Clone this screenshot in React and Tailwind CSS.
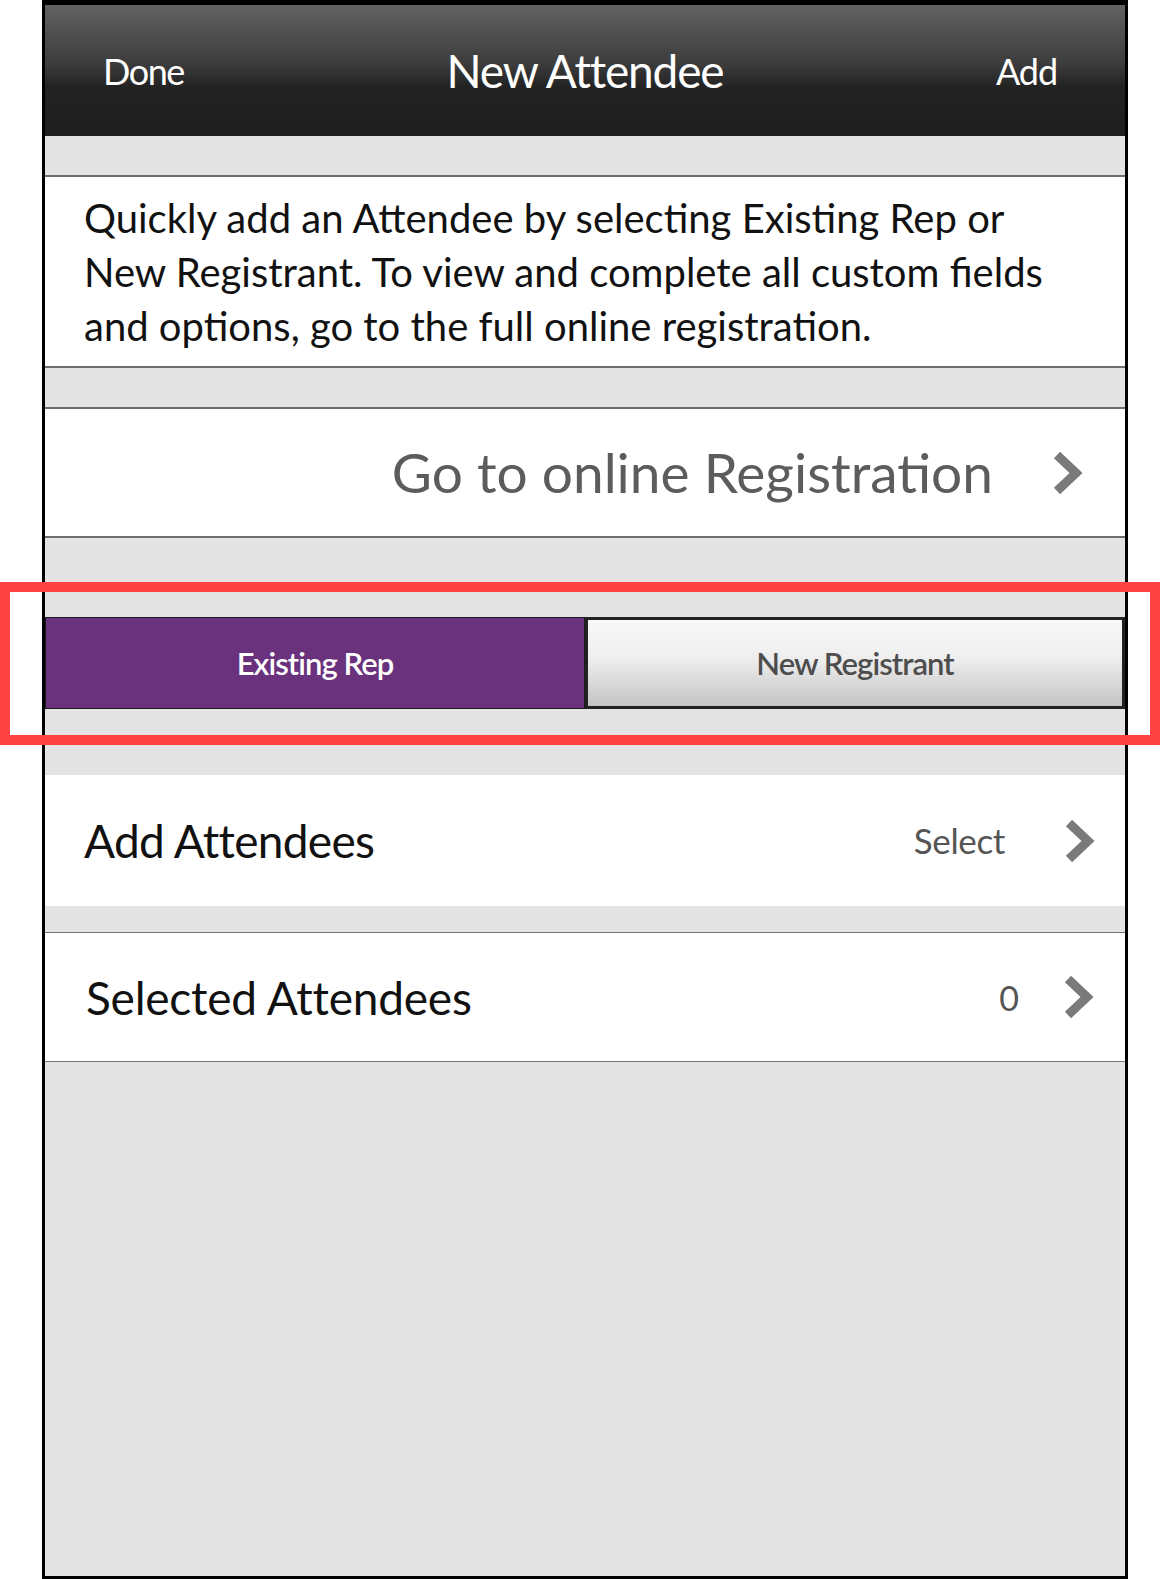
import React from "react";

const Chevron = ({ className = "" }) => (
  <svg viewBox="0 0 32 46" className={className}>
    <polyline
      points="6,5 25,23 6,41"
      fill="none"
      stroke="#7a7a7a"
      strokeWidth="9"
      strokeLinejoin="miter"
    />
  </svg>
);

export default function App() {
  return (
    <div
      className="relative w-[1160px] h-[1579px] bg-white"
      style={{ fontFamily: "Lato, 'Noto Sans', sans-serif" }}
    >
      <div className="ml-[42px] w-[1086px] h-full flex flex-col border-x-[3px] border-t-[5px] border-b-[3px] border-black bg-[#e4e4e4]">
        {/* nav bar */}
        <div className="h-[131px] shrink-0 flex items-center justify-between pl-[58px] pr-[68px] text-white bg-[linear-gradient(#626262_0%,#3c3c3c_45%,#232323_62%,#1e1e1e_100%)]">
          <span className="text-[36px] tracking-[-0.04em] w-[100px]">Done</span>
          <span className="text-[46px] tracking-[-0.025em]">New Attendee</span>
          <span className="text-[36px] tracking-[-0.03em] w-[90px] text-right">Add</span>
        </div>

        <div className="h-[39px] shrink-0" />

        {/* intro text */}
        <div className="h-[193px] shrink-0 bg-white border-y-2 border-[#6e6e6e] flex items-center pl-[39px]">
          <p className="text-[40px] leading-[54px] text-[#111]">
            Quickly add an Attendee by selecting Existing Rep or
            <br />
            New Registrant. To view and complete all custom fields
            <br />
            and options, go to the full online registration.
          </p>
        </div>

        <div className="h-[39px] shrink-0" />

        <div className="h-[131px] shrink-0 bg-white border-y-2 border-[#6e6e6e] flex items-center justify-end pr-[42px]">
          <span className="text-[55px] text-[#5c5c5c]">Go to online Registration</span>
          <Chevron className="w-[32px] h-[46px] ml-[58px]" />
        </div>

        <div className="h-[79px] shrink-0" />

        {/* segmented control */}
        <div className="h-[92px] shrink-0 flex">
          <button className="w-[540px] h-full bg-[#6a317d] border border-[#1a1a1a] text-white text-[31px] font-semibold tracking-[-0.03em]">
            Existing Rep
          </button>
          <button className="w-[540px] h-full border-[3px] border-[#222] bg-[linear-gradient(#f9f9f9_0%,#eeeeee_45%,#c4c4c4_100%)] text-[#4d4d4d] text-[31px] font-semibold tracking-[-0.03em]">
            New Registrant
          </button>
        </div>

        <div className="h-[66px] shrink-0" />

        <div className="h-[131px] shrink-0 bg-white flex items-center pl-[39px] pr-[30px]">
          <span className="text-[46px] text-[#111] tracking-[-0.015em]">Add Attendees</span>
          <span className="ml-auto text-[35px] text-[#555] tracking-[-0.01em]">Select</span>
          <Chevron className="w-[32px] h-[46px] ml-[58px]" />
        </div>

        <div className="h-[26px] shrink-0" />

        <div className="h-[130px] shrink-0 bg-white border-y border-[#777] flex items-center pl-[41px] pr-[31px]">
          <span className="text-[46px] text-[#111] tracking-[-0.005em]">Selected Attendees</span>
          <span className="ml-auto text-[34px] text-[#555]">0</span>
          <Chevron className="w-[32px] h-[46px] ml-[43px]" />
        </div>

        <div className="flex-1" />
      </div>

      {/* highlight box */}
      <div className="absolute left-0 top-[582px] w-[1160px] h-[163px] border-[10px] border-[#fd4343] pointer-events-none" />
    </div>
  );
}
